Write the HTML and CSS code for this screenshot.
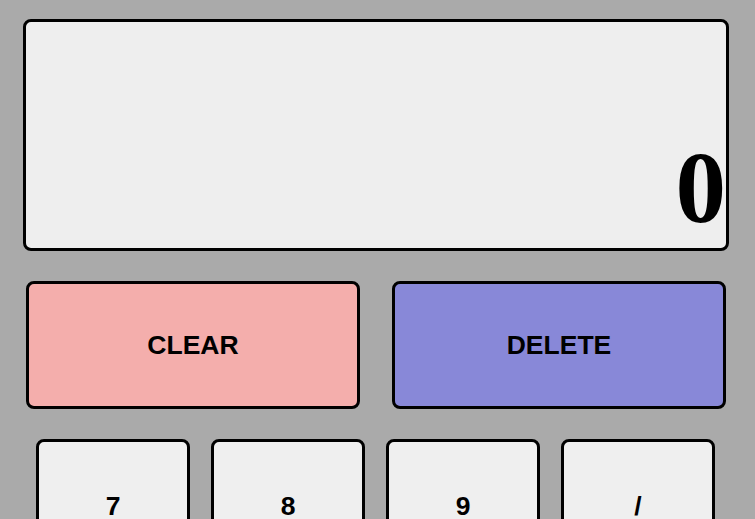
FILE: index.html
```html
<!DOCTYPE html>
<html>
<head>
<meta charset="utf-8">
<link rel="stylesheet" href="styles.css">
</head>
<body>
<div class="calc">
  <div class="display"><span class="value">0</span></div>
  <div class="actions">
    <button class="btn clear">CLEAR</button>
    <button class="btn delete">DELETE</button>
  </div>
  <div class="keys">
    <button class="key">7</button>
    <button class="key">8</button>
    <button class="key">9</button>
    <button class="key">/</button>
  </div>
</div>
</body>
</html>
```
FILE: styles.css
```css
html, body {
  margin: 0;
  padding: 0;
  background: #aaaaaa;
  height: 100%;
  overflow: hidden;
}
.calc {
  display: flex;
  flex-direction: column;
  padding-top: 19px;
}
.display {
  box-sizing: border-box;
  margin-left: 23px;
  width: 706px;
  height: 232px;
  background: #eeeeee;
  border: 3px solid #000;
  border-radius: 8px;
  display: flex;
  align-items: flex-end;
  justify-content: flex-end;
  overflow: hidden;
}
.value {
  font-family: "Liberation Serif", "Times New Roman", serif;
  font-weight: bold;
  font-size: 101px;
  line-height: 1;
  margin-bottom: 9px;
  margin-right: 0;
}
.actions {
  display: flex;
  gap: 32px;
  margin-top: 30px;
  margin-left: 26px;
}
.btn, .key {
  box-sizing: border-box;
  border: 3px solid #000;
  border-radius: 8px;
  font-family: "Liberation Sans", Arial, sans-serif;
  font-weight: bold;
  font-size: 26.5px;
  color: #000;
  padding: 0;
  margin: 0;
}
.btn {
  width: 334px;
  height: 128px;
}
.clear { background: #f4aeac; }
.delete { background: #8888d8; }
.keys {
  display: flex;
  gap: 21px;
  margin-top: 30px;
  margin-left: 36px;
}
.key {
  width: 154px;
  height: 135px;
  background: #efefef;
}
```
